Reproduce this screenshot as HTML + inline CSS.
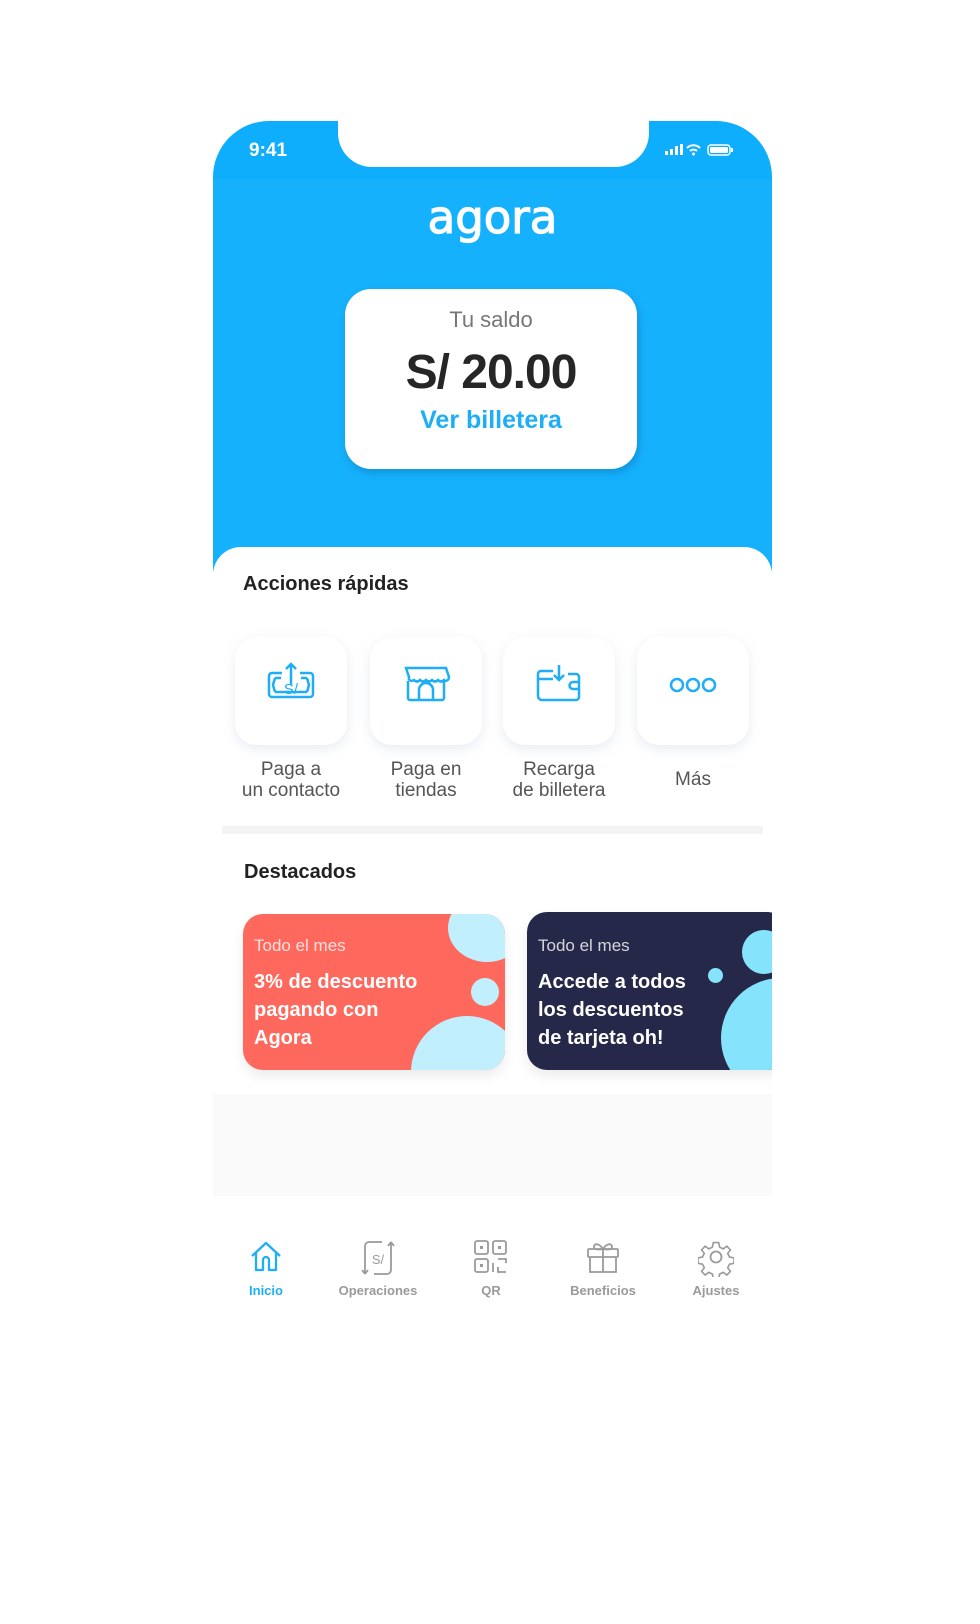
<!DOCTYPE html>
<html><head><meta charset="utf-8"><style>
*{margin:0;padding:0;box-sizing:border-box}
body{width:980px;height:1624px;background:#fff;position:relative;overflow:hidden;font-family:"Liberation Sans",sans-serif}
.a{position:absolute}
.phone{left:213px;top:121px;width:559px;height:1180px;overflow:hidden;border-radius:56px 56px 0 0}
.blue{left:0;top:0;width:559px;height:450px;background:#0eaefc}
.notch{left:125px;top:-10px;width:311px;height:56px;background:#fff;border-radius:0 0 34px 34px}
.tile{width:112px;height:108px;background:#fff;border-radius:22px;box-shadow:0 4px 12px rgba(120,150,190,.18)}
.lbl{width:150px;text-align:center;font-size:19px;line-height:21px;color:#555}
.card{border-radius:20px;overflow:hidden;box-shadow:0 6px 12px rgba(0,0,0,.08)}
.ct{font-size:17px;color:rgba(255,255,255,.8)}
.cb{font-size:20px;font-weight:bold;color:#fff;line-height:28px}
.b{border-radius:50%;position:absolute}
.tab{width:110px;text-align:center;font-size:13px;font-weight:bold;color:#9a9a9a}
</style></head><body>
<div class="a phone">
 <div class="a blue"></div>
 <div class="a" style="left:0;top:58px;width:559px;height:392px;background:#16b1fd"></div>
 <div class="a notch"></div>
 <div class="a" style="left:36px;top:19px;color:#fff;font-size:19px;font-weight:bold">9:41</div>
 <svg class="a" style="left:452px;top:22px" width="70" height="14" viewBox="0 0 70 14"><g fill="#fff"><rect x="0" y="8" width="3" height="4"/><rect x="5" y="6" width="3" height="6"/><rect x="10" y="3" width="3" height="9"/><rect x="15" y="1" width="3" height="11"/></g><path d="M22 5a9 9 0 0 1 13 0M25 8a5 5 0 0 1 7 0" stroke="#fff" stroke-width="2" fill="none"/><circle cx="28.5" cy="11" r="1.5" fill="#fff"/><rect x="43" y="2" width="22" height="10" rx="3" stroke="#fff" stroke-width="1.5" fill="none"/><rect x="45" y="4" width="18" height="6" rx="1.5" fill="#fff"/><rect x="66" y="5" width="2" height="4" fill="#fff"/></svg>
 <div class="a" style="left:0;width:559px;top:70px;text-align:center;color:#fff;font-size:45px;-webkit-text-stroke:1.2px #fff;font-family:'DejaVu Sans',sans-serif">agora</div>
 <div class="a" style="left:132px;top:168px;width:292px;height:180px;background:#fff;border-radius:26px;box-shadow:2px 4px 8px rgba(0,60,120,.25);text-align:center">
  <div style="margin-top:18px;font-size:22px;color:#777">Tu saldo</div>
  <div style="margin-top:12px;font-size:48px;font-weight:bold;color:#262626;letter-spacing:-1px">S/ 20.00</div>
  <div style="margin-top:6px;font-size:25px;font-weight:bold;color:#1eaef5">Ver billetera</div>
 </div>
 <div class="a" style="left:0;top:426px;width:559px;height:760px;background:#fff;border-radius:28px 28px 0 0"></div>
 <div class="a" style="left:30px;top:452px;font-size:20px;font-weight:bold;color:#222">Acciones rápidas</div>
 <div class="a tile" style="left:22px;top:516px"><svg width="112" height="108" viewBox="0 0 112 108"><g fill="none" stroke="#1eaef5" stroke-width="2.5"><path d="M47 36h-10a3 3 0 0 0-3 3v18a3 3 0 0 0 3 3h38a3 3 0 0 0 3-3v-18a3 3 0 0 0-3-3h-10"/><path d="M40 41h6M66 41h6M40 55h32M40 41l-2 7 2 7M72 41l2 7-2 7"/><path d="M56 48V27M51 32l5-5 5 5"/></g><text x="56" y="57" text-anchor="middle" font-size="15" fill="#1eaef5" font-family="Liberation Sans">S/</text></svg></div>
 <div class="a tile" style="left:157px;top:516px"><svg width="112" height="108" viewBox="0 0 112 108"><g fill="none" stroke="#1eaef5" stroke-width="2.5"><path d="M36 31h40l3 9c0 3-3 5-5 3-2 2-4 2-6 0-2 2-4 2-6 0-2 2-4 2-6 0-2 2-4 2-6 0-2 2-4 2-6 0-3 2-6 0-5-3z"/><path d="M38 44v17a2 2 0 0 0 2 2h32a2 2 0 0 0 2-2V44"/><path d="M49 63V53a7 7 0 0 1 14 0v10"/></g></svg></div>
 <div class="a tile" style="left:290px;top:516px"><svg width="112" height="108" viewBox="0 0 112 108"><g fill="none" stroke="#1eaef5" stroke-width="2.5"><path d="M50 34h-12a3 3 0 0 0-3 3v22a4 4 0 0 0 4 4h34a3 3 0 0 0 3-3v-20a3 3 0 0 0-3-3h-8"/><path d="M35 42h15M76 45h-6a3 3 0 0 0 0 7h6"/><path d="M56 28v15M51 38l5 5 5-5"/></g></svg></div>
 <div class="a tile" style="left:424px;top:516px"><svg width="112" height="108" viewBox="0 0 112 108"><g fill="none" stroke="#1eaef5" stroke-width="2.5"><circle cx="40" cy="48" r="6"/><circle cx="56" cy="48" r="6"/><circle cx="72" cy="48" r="6"/></g></svg></div>
 <div class="a lbl" style="left:3px;top:638px">Paga a<br>un contacto</div>
 <div class="a lbl" style="left:138px;top:638px">Paga en<br>tiendas</div>
 <div class="a lbl" style="left:271px;top:638px">Recarga<br>de billetera</div>
 <div class="a lbl" style="left:405px;top:648px">Más</div>
 <div class="a" style="left:9px;top:705px;width:541px;height:8px;background:#f3f3f3"></div>
 <div class="a" style="left:31px;top:740px;font-size:20px;font-weight:bold;color:#222">Destacados</div>
 <div class="a card" style="left:30px;top:793px;width:262px;height:156px;background:#fe685d">
  <div class="b" style="left:205px;top:-20px;width:78px;height:68px;background:#c2effd"></div>
  <div class="b" style="left:228px;top:64px;width:28px;height:28px;background:#c2effd"></div>
  <div class="b" style="left:168px;top:102px;width:112px;height:112px;background:#c2effd"></div>
  <div class="a ct" style="left:11px;top:22px">Todo el mes</div>
  <div class="a cb" style="left:11px;top:54px">3% de descuento<br>pagando con<br>Agora</div>
 </div>
 <div class="a card" style="left:314px;top:791px;width:260px;height:158px;background:#252848">
  <div class="b" style="left:215px;top:18px;width:44px;height:44px;background:#85e3fb"></div>
  <div class="b" style="left:181px;top:56px;width:15px;height:15px;background:#85e3fb"></div>
  <div class="b" style="left:194px;top:66px;width:120px;height:120px;background:#85e3fb"></div>
  <div class="a ct" style="left:11px;top:24px">Todo el mes</div>
  <div class="a cb" style="left:11px;top:56px">Accede a todos<br>los descuentos<br>de tarjeta oh!</div>
 </div>
 <div class="a" style="left:0;top:973px;width:559px;height:102px;background:#fafafa"></div>
 <svg class="a" style="left:35px;top:1118px" width="36" height="36" viewBox="0 0 36 36"><path d="M4 17L18 4l14 13M8 14v17h7V21a3 3 0 0 1 6 0v10h7V14" fill="none" stroke="#1eaef5" stroke-width="2.3" stroke-linejoin="round"/></svg>
 <svg class="a" style="left:147px;top:1118px" width="36" height="38" viewBox="0 0 36 38"><g fill="none" stroke="#9a9a9a" stroke-width="1.8"><path d="M22 3h-13a4 4 0 0 0-4 4v28M5 35l-3-4M5 35l3-4M14 35h13a4 4 0 0 0 4-4V3M31 3l-3 4M31 3l3 4"/></g><text x="18" y="25" text-anchor="middle" font-size="13" fill="#9a9a9a" font-family="Liberation Sans">S/</text></svg>
 <svg class="a" style="left:260px;top:1118px" width="36" height="38" viewBox="0 0 36 38"><g fill="none" stroke="#9a9a9a" stroke-width="1.8"><rect x="2" y="2" width="13" height="13" rx="2"/><rect x="20" y="2" width="13" height="13" rx="2"/><rect x="2" y="20" width="13" height="13" rx="2"/><path d="M20 24v9M25 20h8v4M25 28v5h8"/></g><g fill="#9a9a9a"><rect x="7" y="7" width="3" height="3"/><rect x="25" y="7" width="3" height="3"/><rect x="7" y="25" width="3" height="3"/></g></svg>
 <svg class="a" style="left:372px;top:1118px" width="36" height="38" viewBox="0 0 36 38"><g fill="none" stroke="#9a9a9a" stroke-width="1.8"><rect x="3" y="10" width="30" height="8" rx="1"/><path d="M5 18v15h26V18M18 10v23M18 10c-4-6-9-6-9-2s9 2 9 2c4-6 9-6 9-2s-9 2-9 2"/></g></svg>
 <svg class="a" style="left:485px;top:1118px" width="36" height="38" viewBox="0 0 36 38"><g fill="none" stroke="#9a9a9a" stroke-width="1.8"><path d="M15 2h6l1 5 4 2 4-3 4 4-3 4 2 4 5 1v6l-5 1-2 4 3 4-4 4-4-3-4 2-1 5h-6l-1-5-4-2-4 3-4-4 3-4-2-4-5-1v-6l5-1 2-4-3-4 4-4 4 3 4-2z" transform="scale(.9) translate(2 2)"/><circle cx="18" cy="18" r="5.5"/></g></svg>
 <div class="a tab" style="left:-2px;top:1162px;color:#1eaef5">Inicio</div>
 <div class="a tab" style="left:110px;top:1162px">Operaciones</div>
 <div class="a tab" style="left:223px;top:1162px">QR</div>
 <div class="a tab" style="left:335px;top:1162px">Beneficios</div>
 <div class="a tab" style="left:448px;top:1162px">Ajustes</div>
</div>
</body></html>
